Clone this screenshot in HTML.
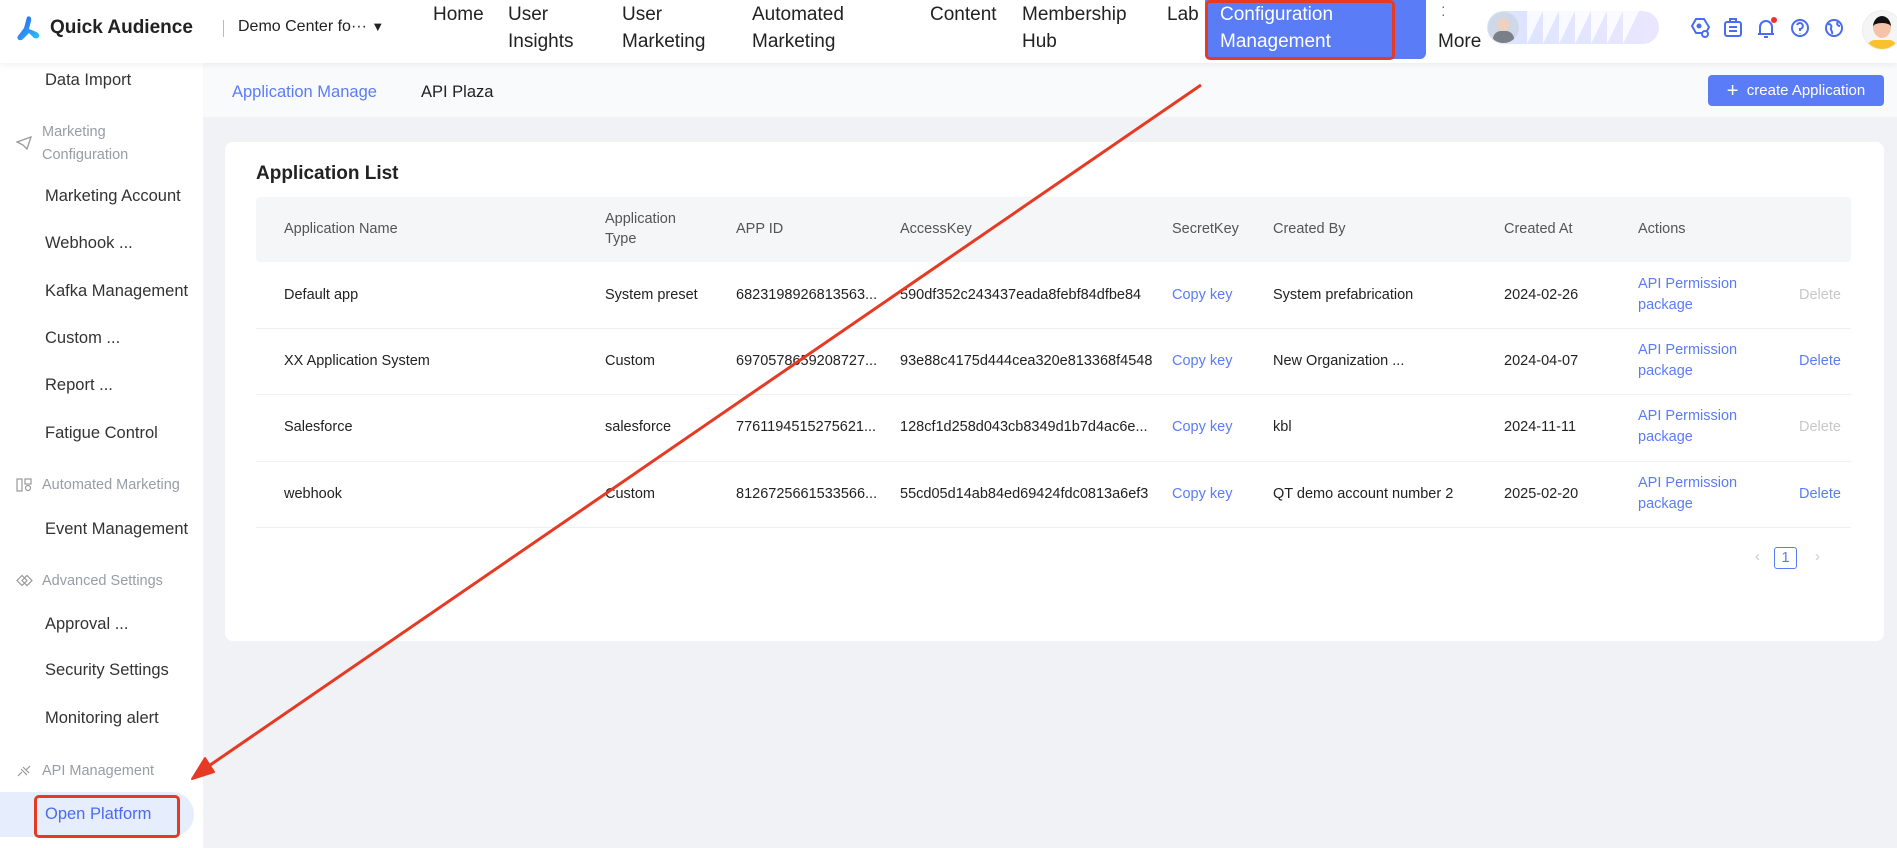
<!DOCTYPE html>
<html><head><meta charset="utf-8"><style>
*{box-sizing:border-box;margin:0;padding:0}
body{width:1897px;height:848px;overflow:hidden;background:#f0f2f5;font-family:"Liberation Sans","Noto Sans CJK SC",sans-serif;color:#222;position:relative}
.hdr{position:absolute;left:0;top:0;width:1897px;height:63px;background:#fff;box-shadow:0 2px 6px rgba(0,0,0,.06);z-index:2}
.a{position:absolute;white-space:nowrap}
.nav{font-size:19px;line-height:27px;color:#222;top:0}
.side{position:absolute;left:0;top:63px;width:203px;height:785px;background:#fff}
.si{position:absolute;left:45px;font-size:16.5px;color:#333;white-space:nowrap}
.sec{position:absolute;left:42px;font-size:14.5px;color:#9a9ca6;line-height:23px}
.tabs{position:absolute;left:203px;top:63px;width:1694px;height:54px;background:#f9fafc}
.card{position:absolute;left:225px;top:142px;width:1659px;height:499px;background:#fff;border-radius:8px}
.th{position:absolute;left:256px;top:197px;width:1595px;height:65px;background:#f5f6f8;border-radius:4px}
.c{position:absolute;font-size:14.5px;white-space:nowrap;transform:translateY(-50%)}
.h{color:#555}
.b{color:#5b7cf7}
.g{color:#c8c8c8}
.line{position:absolute;left:256px;width:1595px;height:1px;background:#eef0f3}
</style></head><body>
<div class="hdr">
 <svg class="a" style="left:16px;top:15px" width="26" height="28" viewBox="0 0 26 28"><defs><linearGradient id="lg" x1="0" y1="0" x2="1" y2="1"><stop offset="0" stop-color="#2a5cf0"/><stop offset="1" stop-color="#2ec5f5"/></linearGradient></defs><path d="M11 2c3-2 5 1 4 4l-2 8c2 1 6 2 9 4 3 3 0 7-4 5l-5-5-6 6c-3 3-7 0-5-3l6-8z" fill="url(#lg)"/></svg>
 <div class="a" style="left:50px;top:17px;font-size:19px;font-weight:bold;color:#222">Quick Audience</div>
 <div class="a" style="left:223px;top:20px;width:1px;height:17px;background:#bbb"></div>
 <div class="a" style="left:238px;top:18px;font-size:16px;color:#222">Demo Center fo··· <span style="font-size:13px">▼</span></div>
 <div class="a nav" style="left:433px;top:1px">Home</div>
 <div class="a nav" style="left:508px;top:1px">User<br>Insights</div>
 <div class="a nav" style="left:622px;top:1px">User<br>Marketing</div>
 <div class="a nav" style="left:752px;top:1px">Automated<br>Marketing</div>
 <div class="a nav" style="left:930px;top:1px">Content</div>
 <div class="a nav" style="left:1022px;top:1px">Membership<br>Hub</div>
 <div class="a nav" style="left:1167px;top:1px">Lab</div>
 <div class="a" style="left:1205px;top:0;width:221px;height:59px;background:#5b7cf7;border-radius:0 0 6px 6px"></div>
 <div class="a nav" style="left:1220px;top:1px;color:#fff">Configuration<br>Management</div>
 <div class="a" style="left:1205px;top:0;width:190px;height:60px;border:3px solid #e53a24;border-radius:5px"></div>
 <div class="a" style="left:1441px;top:2px;font-size:14px;color:#666;line-height:8px">·<br>·</div>
 <div class="a nav" style="left:1438px;top:28px">More</div>
 <div class="a" style="left:1487px;top:11px;width:172px;height:33px;border-radius:17px;background:linear-gradient(90deg,#dbe4ff,#eae6ff);overflow:hidden">
  <svg width="172" height="33" style="position:absolute;left:0;top:0"><g fill="#fff" opacity=".8"><path d="M40 33L56 0H40z"/><path d="M56 33L72 0H56z"/><path d="M72 33L88 0H72z"/><path d="M88 33L104 0H88z"/><path d="M104 33L120 0H104z"/><path d="M120 33L136 0H120z"/><path d="M136 33L152 0H136z"/></g></svg>
  <div style="position:absolute;left:1px;top:1px;width:31px;height:31px;border-radius:50%;background:#cfd8e6;overflow:hidden"><div style="position:absolute;left:10px;top:6px;width:11px;height:13px;border-radius:50%;background:#f0d0bf"></div><div style="position:absolute;left:5px;top:19px;width:21px;height:14px;border-radius:8px 8px 0 0;background:#7a7f88"></div></div>
 </div>
 <svg class="a" style="left:1690px;top:16px" width="180" height="24" viewBox="0 0 180 24" fill="none" stroke="#4a6cf0" stroke-width="2">
  <path d="M6 3h8l5 8-3 6H6l-4-7z"/><circle cx="9" cy="10" r="1.5" fill="#4a6cf0"/><circle cx="15" cy="18" r="3" fill="#fff"/>
  <rect x="35" y="6" width="16" height="14" rx="2"/><path d="M39 11h8M39 15h8M40 6V3h6v3"/>
  <path d="M70 18V11a6 6 0 0 1 12 0v7zM68 18h16M74 21h4"/><circle cx="84" cy="4" r="3" fill="#f03030" stroke="none"/>
  <circle cx="110" cy="12" r="8"/><path d="M107 9a3 3 0 1 1 3 4v2M110 17v.5"/>
  <circle cx="144" cy="12" r="8"/><path d="M138 8c3 0 4 2 3 4s2 3 1 6M148 6c-2 2 0 4 2 4"/>
 </svg>
 <div class="a" style="left:1862px;top:10px;width:40px;height:40px;border-radius:50%;background:#f5f5f5;overflow:hidden;border:1px solid #eee"><div style="position:absolute;left:10px;top:5px;width:18px;height:22px;border-radius:50%;background:#f4c3a8;border-top:7px solid #111"></div><div style="position:absolute;left:4px;top:29px;width:30px;height:14px;border-radius:8px 8px 0 0;background:#fbc02d"></div></div>
</div>

<div class="side">
 <div class="si" style="top:8px">Data Import</div>
 <svg class="a" style="left:16px;top:73px" width="16" height="14" viewBox="0 0 16 14" fill="none" stroke="#999" stroke-width="1.3"><path d="M1 6l14-5-4 12-4-4z"/></svg>
 <div class="sec" style="top:58px">Marketing<br>Configuration</div>
 <div class="si" style="top:124px">Marketing Account</div>
 <div class="si" style="top:171px">Webhook ...</div>
 <div class="si" style="top:219px">Kafka Management</div>
 <div class="si" style="top:266px">Custom ...</div>
 <div class="si" style="top:313px">Report ...</div>
 <div class="si" style="top:361px">Fatigue Control</div>
 <svg class="a" style="left:16px;top:415px" width="16" height="14" viewBox="0 0 16 14" fill="none" stroke="#999" stroke-width="1.2"><rect x="1" y="1" width="5" height="12"/><rect x="9" y="1" width="6" height="5"/><circle cx="12" cy="10" r="2.5"/></svg>
 <div class="sec" style="top:411px">Automated Marketing</div>
 <div class="si" style="top:457px">Event Management</div>
 <svg class="a" style="left:16px;top:511px" width="17" height="13" viewBox="0 0 17 13" fill="none" stroke="#999" stroke-width="1.2"><path d="M1 6.5l5-5 5 5-5 5zM6 6.5l5-5 5 5-5 5z"/></svg>
 <div class="sec" style="top:507px">Advanced Settings</div>
 <div class="si" style="top:552px">Approval ...</div>
 <div class="si" style="top:598px">Security Settings</div>
 <div class="si" style="top:646px">Monitoring alert</div>
 <svg class="a" style="left:16px;top:701px" width="16" height="14" viewBox="0 0 16 14" fill="none" stroke="#999" stroke-width="1.2"><path d="M2 12l4-4M10 6l4-4M5 5l6 6M7 3l6 6"/></svg>
 <div class="sec" style="top:697px">API Management</div>
 <div class="a" style="left:0;top:729px;width:194px;height:45px;background:#e6edfd;border-radius:0 23px 23px 0"></div>
 <div class="si" style="top:742px;color:#4a6cf0">Open Platform</div>
 <div class="a" style="left:34px;top:732px;width:146px;height:43px;border:3px solid #e53a24;border-radius:5px"></div>
</div>

<div class="tabs">
 <div class="a" style="left:29px;top:20px;font-size:16.5px;color:#5b7cf7">Application Manage</div>
 <div class="a" style="left:218px;top:20px;font-size:16.5px;color:#222">API Plaza</div>
 <div class="a" style="left:1505px;top:12px;width:176px;height:31px;background:#5b7cf7;border-radius:4px;color:#fff;font-size:15px;line-height:31px;text-align:center"><span style="font-size:20px;vertical-align:-2px">+</span>&nbsp; create Application</div>
</div>

<div class="card"></div>
<div class="a" style="left:256px;top:163px;font-size:19px;font-weight:bold;color:#222">Application List</div>
<div class="th"></div>
<div class="c h" style="left:284px;top:229px">Application Name</div>
<div class="c h" style="left:605px;top:229px;line-height:20px">Application<br>Type</div>
<div class="c h" style="left:736px;top:229px">APP ID</div>
<div class="c h" style="left:900px;top:229px">AccessKey</div>
<div class="c h" style="left:1172px;top:229px">SecretKey</div>
<div class="c h" style="left:1273px;top:229px">Created By</div>
<div class="c h" style="left:1504px;top:229px">Created At</div>
<div class="c h" style="left:1638px;top:229px">Actions</div>

<div class="c" style="left:284px;top:295px">Default app</div>
<div class="c" style="left:605px;top:295px">System preset</div>
<div class="c" style="left:736px;top:295px">6823198926813563...</div>
<div class="c" style="left:900px;top:295px">590df352c243437eada8febf84dfbe84</div>
<div class="c b" style="left:1172px;top:295px">Copy key</div>
<div class="c" style="left:1273px;top:295px">System prefabrication</div>
<div class="c" style="left:1504px;top:295px">2024-02-26</div>
<div class="c b" style="left:1638px;top:295px;line-height:21px">API Permission<br>package</div>
<div class="c g" style="left:1799px;top:295px">Delete</div>
<div class="line" style="top:328px"></div>

<div class="c" style="left:284px;top:361px">XX Application System</div>
<div class="c" style="left:605px;top:361px">Custom</div>
<div class="c" style="left:736px;top:361px">6970578659208727...</div>
<div class="c" style="left:900px;top:361px">93e88c4175d444cea320e813368f4548</div>
<div class="c b" style="left:1172px;top:361px">Copy key</div>
<div class="c" style="left:1273px;top:361px">New Organization ...</div>
<div class="c" style="left:1504px;top:361px">2024-04-07</div>
<div class="c b" style="left:1638px;top:361px;line-height:21px">API Permission<br>package</div>
<div class="c b" style="left:1799px;top:361px">Delete</div>
<div class="line" style="top:394px"></div>

<div class="c" style="left:284px;top:427px">Salesforce</div>
<div class="c" style="left:605px;top:427px">salesforce</div>
<div class="c" style="left:736px;top:427px">7761194515275621...</div>
<div class="c" style="left:900px;top:427px">128cf1d258d043cb8349d1b7d4ac6e...</div>
<div class="c b" style="left:1172px;top:427px">Copy key</div>
<div class="c" style="left:1273px;top:427px">kbl</div>
<div class="c" style="left:1504px;top:427px">2024-11-11</div>
<div class="c b" style="left:1638px;top:427px;line-height:21px">API Permission<br>package</div>
<div class="c g" style="left:1799px;top:427px">Delete</div>
<div class="line" style="top:461px"></div>

<div class="c" style="left:284px;top:494px">webhook</div>
<div class="c" style="left:605px;top:494px">Custom</div>
<div class="c" style="left:736px;top:494px">8126725661533566...</div>
<div class="c" style="left:900px;top:494px">55cd05d14ab84ed69424fdc0813a6ef3</div>
<div class="c b" style="left:1172px;top:494px">Copy key</div>
<div class="c" style="left:1273px;top:494px">QT demo account number 2</div>
<div class="c" style="left:1504px;top:494px">2025-02-20</div>
<div class="c b" style="left:1638px;top:494px;line-height:21px">API Permission<br>package</div>
<div class="c b" style="left:1799px;top:494px">Delete</div>
<div class="line" style="top:527px"></div>

<div class="a" style="left:1755px;top:548px;font-size:15px;color:#ccc">‹</div>
<div class="a" style="left:1774px;top:547px;width:23px;height:22px;border:1px solid #5b7cf7;border-radius:3px;color:#5b7cf7;font-size:15px;text-align:center;line-height:20px">1</div>
<div class="a" style="left:1815px;top:548px;font-size:15px;color:#ccc">›</div>

<svg class="a" style="left:0;top:0;z-index:5" width="1897" height="848"><line x1="1201" y1="85" x2="200" y2="772" stroke="#e53a24" stroke-width="3"/><path d="M192 779L205 758L214 772z" fill="#e53a24" stroke="#e53a24" stroke-width="2" stroke-linejoin="round"/></svg>
</body></html>
